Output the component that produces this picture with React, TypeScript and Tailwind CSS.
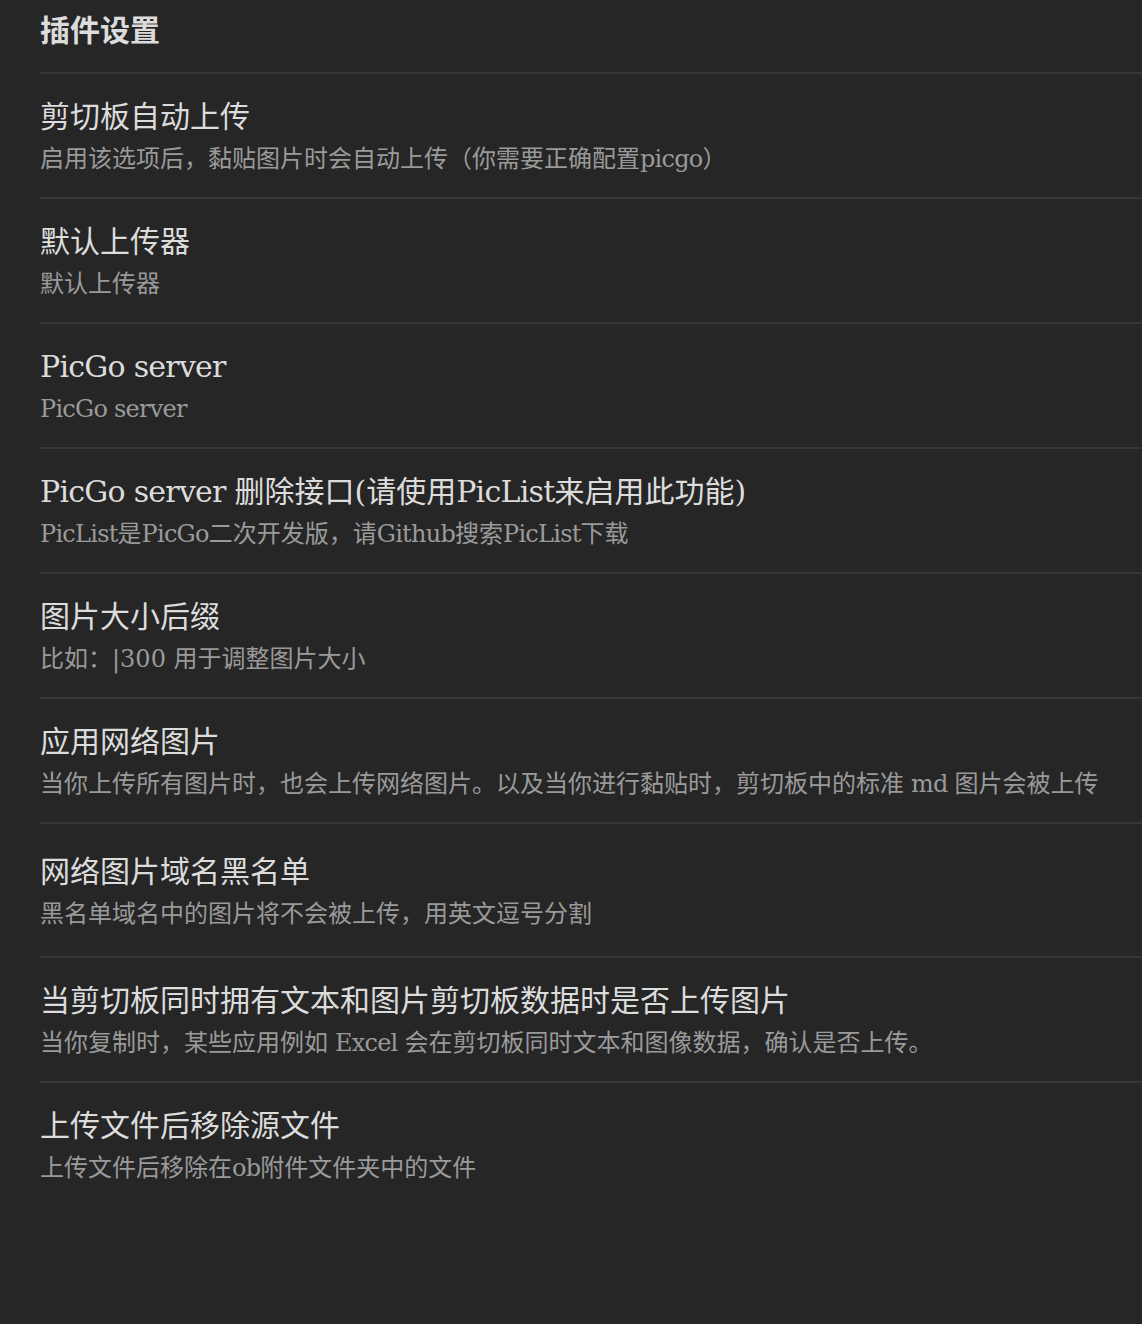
const items: { name: string; desc: string; tall?: boolean }[] = [
  { name: '剪切板自动上传', desc: '启用该选项后，黏贴图片时会自动上传（你需要正确配置picgo）' },
  { name: '默认上传器', desc: '默认上传器' },
  { name: 'PicGo server', desc: 'PicGo server' },
  {
    name: 'PicGo server 删除接口(请使用PicList来启用此功能)',
    desc: 'PicList是PicGo二次开发版，请Github搜索PicList下载',
  },
  { name: '图片大小后缀', desc: '比如：|300 用于调整图片大小' },
  {
    name: '应用网络图片',
    desc: '当你上传所有图片时，也会上传网络图片。以及当你进行黏贴时，剪切板中的标准 md 图片会被上传',
  },
  { name: '网络图片域名黑名单', desc: '黑名单域名中的图片将不会被上传，用英文逗号分割', tall: true },
  {
    name: '当剪切板同时拥有文本和图片剪切板数据时是否上传图片',
    desc: '当你复制时，某些应用例如 Excel 会在剪切板同时文本和图像数据，确认是否上传。',
  },
  { name: '上传文件后移除源文件', desc: '上传文件后移除在ob附件文件夹中的文件' },
];

// latin runs get tighter spacing so the serif matches the reference widths
function Mixed({ text }: { text: string }) {
  return (
    <>
      {text.split(/([A-Za-z0-9 .()|]+)/).map((part, i) =>
        /[A-Za-z]/.test(part) ? (
          <span key={i} className="tracking-[-0.75px]">
            {part}
          </span>
        ) : (
          part
        )
      )}
    </>
  );
}

export default function App() {
  return (
    <div className="min-h-[1324px] w-full bg-[#262626] pl-[40px] font-['DejaVu_Serif','Noto_Sans_CJK_SC',serif]">
      <h2 className="pt-[8px] pb-[18px] text-[30px] leading-[46px] font-bold text-[#dcdcdc]">插件设置</h2>

      {items.map((item) => (
        <div
          key={item.name}
          className={`border-t-2 border-[#363636] ${item.tall ? 'pt-[25px] pb-[23px]' : 'pt-[20px] pb-[19px]'}`}
        >
          <div className="text-[30px] leading-[46px] text-[#dcdcdc]">
            <Mixed text={item.name} />
          </div>
          <div className="text-[24px] leading-[38px] text-[#9a9a9a]">
            <Mixed text={item.desc} />
          </div>
        </div>
      ))}
    </div>
  );
}
